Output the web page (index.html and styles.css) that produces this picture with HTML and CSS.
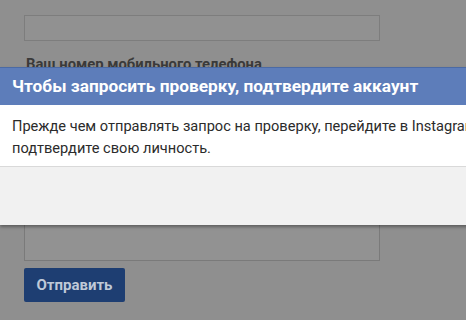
FILE: index.html
```html
<!DOCTYPE html>
<html lang="ru">
<head>
<meta charset="utf-8">
<link rel="stylesheet" href="styles.css">
</head>
<body>
<div class="page">
  <div class="input"></div>
  <div class="label">Ваш номер мобильного телефона</div>
  <div class="input phone"></div>
  <div class="textarea"></div>
  <button class="btn">Отправить</button>
</div>
<div class="modal">
  <div class="modal-head">Чтобы запросить проверку, подтвердите аккаунт</div>
  <div class="modal-body">Прежде чем отправлять запрос на проверку, перейдите в Instagram и<br>подтвердите свою личность.</div>
  <div class="modal-foot"></div>
</div>
</body>
</html>
```
FILE: styles.css
```css
html, body {
  margin: 0;
  padding: 0;
}
body {
  width: 466px;
  height: 320px;
  overflow: hidden;
  position: relative;
  background: #8f8f8f;
  font-family: Roboto, "Noto Sans", sans-serif;
}
.page {
  padding: 15px 0 0 24px;
  display: flex;
  flex-direction: column;
  align-items: flex-start;
}
.input {
  width: 354px;
  height: 24px;
  border: 1px solid #7d7d7d;
  background: #919191;
}
.label {
  margin-top: 14px;
  padding-left: 2px;
  font-size: 14.8px;
  font-weight: 700;
  line-height: 18px;
  color: #3a3a3a;
}
.phone {
  margin-top: 6px;
}
.textarea {
  margin-top: 38px;
  width: 354px;
  height: 116px;
  border: 1px solid #7a7a7a;
  background: #929292;
}
.btn {
  margin-top: 7px;
  width: 101px;
  height: 34px;
  border: none;
  border-radius: 2px;
  background: #1e3e72;
  color: #bfc9d8;
  font-family: Roboto, "Noto Sans", sans-serif;
  font-size: 15px;
  font-weight: 700;
  padding: 0;
}
.modal {
  position: absolute;
  left: 0;
  top: 67px;
  width: 620px;
  box-shadow: 0 2px 3px rgba(0,0,0,0.35);
}
.modal-head {
  height: 37px;
  border-top: 1px solid #4b6aa4;
  background: #5d7dba;
  color: #ffffff;
  font-size: 17.3px;
  font-weight: 700;
  line-height: 37px;
  padding-left: 12px;
  white-space: nowrap;
}
.modal-body {
  height: 62px;
  box-sizing: border-box;
  padding: 10px 12px 0;
  background: #ffffff;
  color: #2b2b2b;
  font-size: 14.6px;
  line-height: 22px;
  white-space: nowrap;
  border-bottom: 1px solid #d9d9d9;
}
.modal-foot {
  height: 58px;
  background: #f1f1f1;
}
```
